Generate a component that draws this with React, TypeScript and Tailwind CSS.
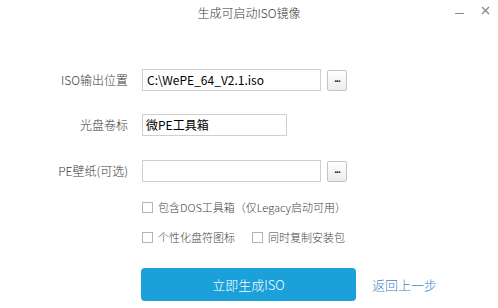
import React from "react";

const font = { fontFamily: '"Noto Sans CJK SC", "Noto Sans", sans-serif' };

function Check({ label }: { label: string }) {
  return (
    <div className="flex items-center gap-[5px]">
      <div className="w-[11px] h-[11px] border border-[#b4b4b4] bg-white" />
      <span className="text-[11px] text-[#444] leading-none">{label}</span>
    </div>
  );
}

function Browse() {
  return (
    <div className="w-[20px] h-[21px] border border-[#c4c4c4] rounded-[2px] bg-gradient-to-b from-white to-[#ececec] flex items-end justify-center pb-[6px]">
      <span className="text-[10px] leading-none text-[#222] font-bold tracking-[-1px]" style={{ fontFamily: '"Liberation Sans", sans-serif' }}>...</span>
    </div>
  );
}

export default function App() {
  return (
    <div className="w-[498px] h-[308px] bg-white flex flex-col text-[#3a3a3a] font-light" style={font}>
      <div className="h-[24px] grid grid-cols-[1fr_auto_1fr] items-center">
        <div />
        <div className="text-[12px] leading-none pt-[1px]">生成可启动ISO镜像</div>
        <div className="flex justify-end items-center gap-[17px] pr-[8px]">
          <div className="w-[9px] h-[1px] bg-[#8a8a8a] mt-[3px]" />
          <svg width="9" height="9" viewBox="0 0 9 9" className="-mt-[3px]">
            <path d="M1 1L8 8M8 1L1 8" stroke="#8a8a8a" strokeWidth="1.4" />
          </svg>
        </div>
      </div>

      <div className="flex flex-col pt-[45px]">
        <div className="flex items-center h-[22px]">
          <div className="w-[128px] text-right text-[12px] leading-none">ISO输出位置</div>
          <div className="ml-[14px] w-[179px] h-[22px] border border-[#cfcfcf] flex items-center px-[4px] text-[12px] text-black font-normal">
            C:\WePE_64_V2.1.iso
          </div>
          <div className="ml-[6px]">
            <Browse />
          </div>
        </div>

        <div className="flex items-center h-[22px] mt-[23px]">
          <div className="w-[128px] text-right text-[12px] leading-none">光盘卷标</div>
          <div className="ml-[14px] w-[145px] h-[22px] border border-[#cfcfcf] flex items-center px-[3px] text-[12px] text-black font-normal">
            微PE工具箱
          </div>
        </div>

        <div className="flex items-center h-[22px] mt-[24px]">
          <div className="w-[128px] text-right text-[12px] leading-none">PE壁纸(可选)</div>
          <div className="ml-[14px] w-[179px] h-[22px] border border-[#cfcfcf]" />
          <div className="ml-[6px]">
            <Browse />
          </div>
        </div>

        <div className="pl-[142px] mt-[20px] flex flex-col gap-[19px]">
          <Check label="包含DOS工具箱（仅Legacy启动可用）" />
          <div className="flex gap-[17px]">
            <Check label="个性化盘符图标" />
            <Check label="同时复制安装包" />
          </div>
        </div>

        <div className="pl-[141px] mt-[25px] flex items-center">
          <div className="w-[215px] h-[33px] rounded-[4px] bg-[#1ba0da] flex items-center justify-center text-white text-[13px]">
            立即生成ISO
          </div>
          <div className="ml-[16px] text-[13px] text-[#3f86c6]">返回上一步</div>
        </div>
      </div>
    </div>
  );
}
